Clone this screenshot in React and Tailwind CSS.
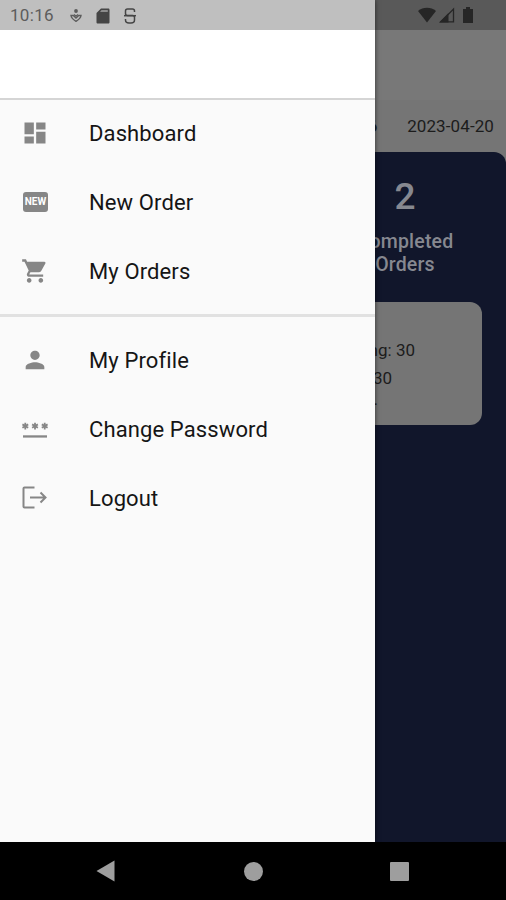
import React from 'react';
import { MdDashboard, MdShoppingCart, MdPerson } from 'react-icons/md';

const mainLinks = [
  { label: 'Dashboard', icon: <MdDashboard size={28} /> },
  { label: 'New Order', icon: <NewBadge /> },
  { label: 'My Orders', icon: <MdShoppingCart size={28} /> },
];

const accountLinks = [
  { label: 'My Profile', icon: <MdPerson size={28} /> },
  { label: 'Change Password', icon: <PasswordIcon /> },
  { label: 'Logout', icon: <LogoutIcon /> },
];

export default function App() {
  return (
    <div className="relative flex h-[900px] w-[506px] flex-col overflow-hidden bg-black font-['Roboto',sans-serif]">
      <div className="relative flex min-h-0 flex-1 flex-col overflow-hidden">
        <Dashboard />
        <Drawer />
      </div>
      <NavigationBar />
    </div>
  );
}

/* Dimmed page behind the drawer */
function Dashboard() {
  return (
    <main className="flex flex-1 flex-col bg-[#757575]">
      <div className="flex h-[30px] shrink-0 items-center justify-end gap-[3px] bg-[#595959] pr-[33px] text-[#262626]">
        <StatusIcons />
      </div>
      <div className="h-[70px] shrink-0 bg-[#787878]" />
      <div className="flex h-[52px] shrink-0 items-center justify-end gap-[30px] pr-3 pt-px text-[17px] text-[#1c1c1c]">
        <span className="font-bold">6</span>
        <span className="tracking-[0.1px]">2023-04-20</span>
      </div>

      <section className="flex flex-1 flex-col rounded-t-[12px] bg-[#11162b] px-6 pt-6">
        <div className="-mr-6 flex w-[202px] flex-col items-center self-end text-[#868890]">
          <span className="text-[37px] font-medium leading-[42px]">2</span>
          <span className="mt-3 text-center text-[19.5px] font-medium leading-[23px] tracking-[0.2px]">
            Completed
            <br />
            Orders
          </span>
        </div>
        <div className="mt-[26px] h-[123px] rounded-[12px] bg-[#757575] pt-[34px] text-right text-[17px] leading-7 text-[#1c1c1c]">
          <p className="pr-[67px]">ng: 30</p>
          <p className="pr-[90px]">30</p>
          <p className="pr-[104px] leading-[15px]">.</p>
        </div>
      </section>
    </main>
  );
}

function Drawer() {
  return (
    <aside className="absolute inset-y-0 left-0 flex w-[375px] flex-col bg-[#fafafa] shadow-[0_0_5px_rgba(0,0,0,0.6)]">
      <div className="flex h-[30px] shrink-0 items-center bg-[#bfbfbf] pl-[10px] pt-px text-[#5c5c5c]">
        <span className="text-[17px] tracking-[0.3px]">10:16</span>
        <svg className="ml-[16px] h-4 w-3" viewBox="0 0 12 16" fill="none" stroke="currentColor">
          <circle cx="6" cy="3" r="1.9" fill="currentColor" stroke="none" />
          <path d="M1 7.500h2.300L6 10l2.700-2.500H11C10.700 10 9 11.500 6 13.300 3 11.500 1.300 10 1 7.500Z" strokeWidth="1.4" />
          <path d="M4 6.500l2 1.800 2-1.800" strokeWidth="1.2" />
        </svg>
        <svg className="ml-[14px] h-4 w-[14px] text-[#454545]" viewBox="0 0 14 16">
          <path d="M5 .5h7.2c.8 0 1.3.5 1.3 1.3v12.4c0 .8-.5 1.3-1.3 1.3H1.8C1 15.500.5 15 .5 14.200V5Z" fill="currentColor" />
          <path d="M5.500 2h6.300v2H4Z" fill="#8c8c8c" />
        </svg>
        <svg className="ml-[14px] h-4 w-3 text-[#454545]" viewBox="0 0 12 16" fill="none" stroke="currentColor" strokeWidth="1.5">
          <path d="M10.500 4V3c0-1.200-.8-2-2-2h-5c-1.200 0-2 .8-2 2v2.500c0 1.200.8 2 2 2h5c1.200 0 2 .8 2 2v2.500c0 1.700-1.500 3-3.500 3H5c-2 0-3.500-1.200-3.500-3v-1" />
          <path d="M0 7.700h12" />
        </svg>
      </div>
      <div className="h-[70px] shrink-0 border-b-2 border-[#d5d5d5] bg-white" />

      <nav className="-mt-px flex flex-col">
        {mainLinks.map((link) => (
          <DrawerItem key={link.label} {...link} />
        ))}
        <div className="flex h-5 items-start pt-2">
          <div className="h-[3px] w-full bg-[#e1e1e1]" />
        </div>
        {accountLinks.map((link) => (
          <DrawerItem key={link.label} {...link} />
        ))}
      </nav>
    </aside>
  );
}

function DrawerItem({ icon, label }) {
  return (
    <a className="flex h-[69px] items-center pb-[2px] pl-[21px]">
      <span className="flex w-[68px] text-[#868686]">{icon}</span>
      <span className="pt-px text-[22px] tracking-[0.12px] text-[#151515]">{label}</span>
    </a>
  );
}

function NewBadge() {
  return (
    <span className="ml-[2px] flex h-5 w-[25px] items-center justify-center rounded-[3px] bg-[#868686] text-[10px] font-bold leading-none text-white">
      NEW
    </span>
  );
}

function PasswordIcon() {
  return (
    <svg width="28" height="28" viewBox="0 0 28 28" fill="currentColor">
      <path d="M2 20.300h24v2.300H2Z" />
      <g stroke="currentColor" strokeWidth="1.800">
        <path d="M4.300 7.700v6.800M1.400 9.400l5.800 3.400M1.400 12.800l5.800-3.400" />
        <path d="M14 7.700v6.800M11.100 9.400l5.800 3.400M11.100 12.800l5.800-3.400" />
        <path d="M23.700 7.700v6.800M20.800 9.400l5.800 3.400M20.800 12.800l5.800-3.400" />
      </g>
    </svg>
  );
}

function LogoutIcon() {
  return (
    <svg width="28" height="28" viewBox="0 0 28 28" fill="none" stroke="currentColor" strokeWidth="2">
      <path d="M13.500 3.500H3.500c-.6 0-1 .4-1 1v18c0 .6.400 1 1 1h10" />
      <path d="M9 13.500h15.500M19.500 8.500l5 5-5 5" />
    </svg>
  );
}

function StatusIcons() {
  return (
    <>
      <svg className="h-4 w-[18px]" viewBox="0 0 18 16" fill="currentColor">
        <path d="M0 4C5-.3 13-.3 18 4L9 15.500Z" />
      </svg>
      <svg className="h-4 w-4" viewBox="0 0 16 16">
        <path d="M0 15.500 9.500 6v9.500Z" fill="currentColor" />
        <path d="M2 14.800 14.500 2v12.800Z" fill="none" stroke="currentColor" strokeWidth="1.300" />
      </svg>
      <svg className="ml-[5px] h-4 w-[10px]" viewBox="0 0 10 16" fill="currentColor">
        <path d="M3 0h4v2h3v14H0V2h3Z" />
      </svg>
    </>
  );
}

/* Android system navigation: back, home, recents */
function NavigationBar() {
  return (
    <footer className="flex h-[58px] shrink-0 items-center bg-black pl-[96px] text-[#9e9e9e]">
      <svg width="19" height="22" viewBox="0 0 19 22" fill="currentColor">
        <path d="M18.500.5v21L.5 11Z" />
      </svg>
      <div className="ml-[129px] size-[19px] rounded-full bg-[#9e9e9e]" />
      <div className="ml-[127px] size-[19px] rounded-[1px] bg-[#9e9e9e]" />
    </footer>
  );
}
